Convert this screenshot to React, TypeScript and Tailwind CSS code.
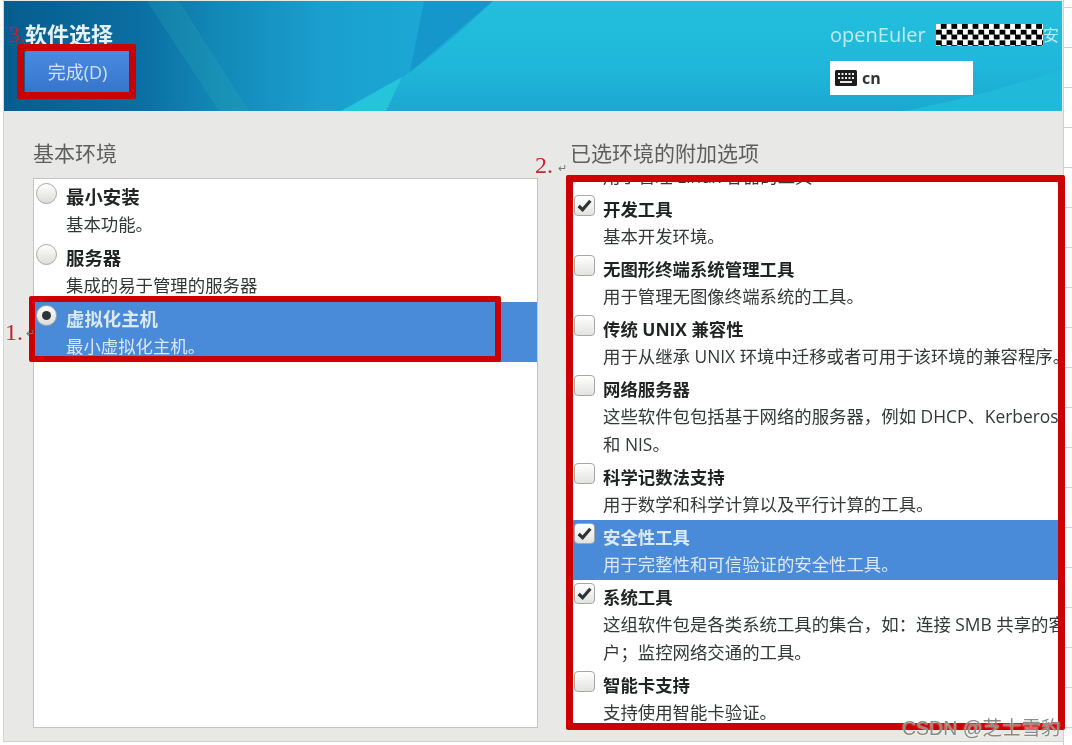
const cjk = "font-['Open_Sans','Noto_Sans_CJK_SC',sans-serif]"

type Row = { title: string; lines: string[]; checked?: boolean; selected?: boolean }

const environments: Row[] = [
  { title: "最小安装", lines: ["基本功能。"] },
  { title: "服务器", lines: ["集成的易于管理的服务器"] },
  { title: "虚拟化主机", lines: ["最小虚拟化主机。"], checked: true, selected: true },
]

const addons: Row[] = [
  { title: "容器管理", lines: ["用于管理 Linux 容器的工具"] },
  { title: "开发工具", lines: ["基本开发环境。"], checked: true },
  { title: "无图形终端系统管理工具", lines: ["用于管理无图像终端系统的工具。"] },
  { title: "传统 UNIX 兼容性", lines: ["用于从继承 UNIX 环境中迁移或者可用于该环境的兼容程序。"] },
  { title: "网络服务器", lines: ["这些软件包包括基于网络的服务器，例如 DHCP、Kerberos", "和 NIS。"] },
  { title: "科学记数法支持", lines: ["用于数学和科学计算以及平行计算的工具。"] },
  { title: "安全性工具", lines: ["用于完整性和可信验证的安全性工具。"], checked: true, selected: true },
  { title: "系统工具", lines: ["这组软件包是各类系统工具的集合，如：连接 SMB 共享的客", "户；监控网络交通的工具。"], checked: true },
  { title: "智能卡支持", lines: ["支持使用智能卡验证。"] },
]

function Radio({ on }: { on?: boolean }) {
  return (
    <span className="mt-[3px] flex h-[21px] w-[21px] shrink-0 items-center justify-center rounded-full border border-[#a8a8a6] bg-gradient-to-b from-[#ffffff] to-[#dcdcda]">
      {on && <span className="h-[9px] w-[9px] rounded-full bg-[#2e3436]" />}
    </span>
  )
}

function Checkbox({ on }: { on?: boolean }) {
  return (
    <span className="mt-[3px] flex h-[21px] w-[21px] shrink-0 items-center justify-center rounded-[4px] border border-[#a8a8a6] bg-gradient-to-b from-[#ffffff] to-[#e2e2e0]">
      {on && (
        <svg viewBox="0 0 16 16" className="h-[17px] w-[17px]">
          <path d="M2.5 8.5 L6.2 12 L13.5 3.5" fill="none" stroke="#2e3436" strokeWidth="3" />
        </svg>
      )}
    </span>
  )
}

function ListRow({
  row,
  control,
  inset,
  titleSize,
}: {
  row: Row
  control: React.ReactNode
  inset: string
  titleSize: string
}) {
  return (
    <div
      className={`flex whitespace-nowrap ${row.selected ? "bg-[#4a8bd9] text-[#dbe8f7]" : "text-[#333836]"}`}
    >
      <div className={`w-[32px] shrink-0 ${inset}`}>{control}</div>
      <div className="pt-[3px] pb-[2px] text-[17.4px] leading-[28px]">
        <div className={`h-[27px] font-bold ${titleSize} ${row.selected ? "" : "text-[#1f2322]"}`}>{row.title}</div>
        {row.lines.map((line) => (
          <div key={line}>{line}</div>
        ))}
      </div>
    </div>
  )
}

function KeyboardIcon() {
  return (
    <svg viewBox="0 0 22 16" className="h-[16px] w-[22px]">
      <rect width="22" height="16" rx="1.5" fill="#1c1c1c" />
      <path d="M3 3h2v2H3zM6.5 3h2v2h-2zM10 3h2v2h-2zM13.5 3h2v2h-2zM17 3h2v2h-2zM3 7h2v2H3zM6.5 7h2v2h-2zM10 7h2v2h-2zM13.5 7h2v2h-2zM17 7h2v2h-2zM5 11h12v2H5z" fill="#e8e8e8" />
    </svg>
  )
}

// the wallpaper swooshes behind the header
function HeaderArt() {
  return (
    <svg viewBox="0 0 1058 110" preserveAspectRatio="none" className="absolute inset-0 h-full w-full">
      <defs>
        <linearGradient id="base" x1="0" x2="1" y1="0" y2="0">
          <stop offset="0" stopColor="#075c8e" />
          <stop offset="0.13" stopColor="#0b6fa3" />
          <stop offset="0.2" stopColor="#1288b6" />
          <stop offset="0.3" stopColor="#1a9fce" />
          <stop offset="0.42" stopColor="#1ca9d6" />
        </linearGradient>
        <linearGradient id="light" x1="0" x2="0" y1="0" y2="1">
          <stop offset="0" stopColor="#22bfdc" />
          <stop offset="0.55" stopColor="#20b8da" />
          <stop offset="1" stopColor="#1ba8d1" />
        </linearGradient>
      </defs>
      <rect width="1058" height="110" fill="url(#base)" />
      <path d="M143 0 L175 0 L245 110 L215 110 Z" fill="#2aa6b8" opacity="0.25" />
      <path d="M420 0 L489 0 Q447 35 406 71 Z" fill="#1597cc" />
      <path d="M489 0 L1058 0 L1058 110 L337 110 Q399 87 489 0 Z" fill="url(#light)" />
      <path d="M337 110 L398 76 L382 110 Z" fill="#25c4da" />
      <path d="M900 110 Q980 95 1058 68 L1058 110 Z" fill="#21b9da" />
    </svg>
  )
}

function Frame({ className }: { className: string }) {
  return <div className={`absolute rounded-[2px] border-[#cc0000] ${className}`} />
}

export default function App() {
  return (
    <div className={`relative flex h-[745px] w-[1072px] overflow-hidden bg-white blur-[0.4px] ${cjk}`}>
      <div className="ml-[3px] flex h-[741px] w-[1060px] flex-col border-l border-[#d4d4d2] bg-[#e8e8e7]">
        {/* header */}
        <header className="relative mt-px flex h-[110px] w-[1058px] shrink-0 justify-between overflow-hidden pl-[21px]">
          <HeaderArt />
          <div className="relative">
            <h1 className="pt-[18px] text-[22px] leading-[30px] font-semibold text-[#e4f2f8]">软件选择</h1>
            <button className="mt-[2px] flex h-[43px] w-[105px] items-center justify-center rounded-[2px] bg-gradient-to-b from-[#4a8ae0] to-[#3574cc] text-[18px] text-[#cfe1f3]">
              完成(D)
            </button>
          </div>
          <div className="relative w-[232px] shrink-0 pt-[19px]">
            <div className="flex h-[30px] items-center whitespace-nowrap text-[20px] text-[#bdebf5]">
              <span className="w-[106px]">openEuler</span>
              <span className="h-[22px] w-[107px] bg-[repeating-conic-gradient(#000000_0_25%,#ffffff_0_50%)] bg-[length:10.6px_10.6px]" />
              <span className="text-[16px]">安</span>
            </div>
            <div className="mt-[11px] flex h-[34px] w-[143px] items-center gap-[5px] bg-white pl-[5px]">
              <KeyboardIcon />
              <span className="text-[16px] font-bold text-[#2e3436]">cn</span>
            </div>
          </div>
        </header>

        {/* lists */}
        <main className="flex min-h-0 flex-1 pt-[27px] pl-[29px]">
          <section className="flex w-[505px] flex-col">
            <h2 className="h-[40px] text-[21px] leading-[30px] text-[#5c5f5e]">基本环境</h2>
            <div className="flex h-[550px] flex-col gap-px border border-[#c4c4c2] bg-white pt-px">
              {environments.map((row) => (
                <ListRow
                  key={row.title}
                  row={row}
                  inset="pl-[2px]"
                  titleSize="text-[18.4px]"
                  control={<Radio on={row.checked} />}
                />
              ))}
            </div>
          </section>
          <section className="ml-[32px] flex min-w-0 flex-1 flex-col">
            <h2 className="h-[40px] text-[21px] leading-[30px] text-[#5c5f5e]">已选环境的附加选项</h2>
            <div className="h-[550px] overflow-hidden bg-white">
              <div className="-mt-[46px] pl-[1px]">
                {addons.map((row) => (
                  <ListRow
                    key={row.title}
                    row={row}
                    inset="pl-[3px]"
                    titleSize="text-[17.4px]"
                    control={<Checkbox on={row.checked} />}
                  />
                ))}
              </div>
            </div>
          </section>
        </main>
      </div>

      {/* page edge of the pasted screenshot */}
      <div className="flex h-[745px] w-[9px] flex-col border-l border-[#d0d0d0] pt-[7px]">
        {Array.from({ length: 19 }).map((_, i) => (
          <div key={i} className="h-[40px] shrink-0 border-t border-[#d0d0d0]" />
        ))}
      </div>
      <div className="absolute bottom-[3px] left-[3px] h-px w-[1060px] bg-[#cfcfcf]" />

      {/* red annotations */}
      <Frame className="top-[44px] left-[17px] h-[55px] w-[119px] border-[7px]" />
      <Frame className="top-[296px] left-[29px] h-[66px] w-[472px] border-[6px]" />
      <Frame className="top-[175px] left-[566px] h-[555px] w-[499px] border-[7px]" />
      <span className="absolute top-[16px] left-[8px] font-['Liberation_Serif',serif] text-[24px] text-[#c0262c]">3.</span>
      <span className="absolute top-[314px] left-[5px] font-['Liberation_Serif',serif] text-[24px] text-[#c0262c]">1.</span>
      <span className="absolute top-[147px] left-[535px] font-['Liberation_Serif',serif] text-[24px] text-[#c0262c]">2.</span>
      <span className="absolute top-[160px] left-[558px] text-[11px] text-[#777777]">↵</span>
      <span className="absolute top-[325px] left-[26px] text-[11px] text-[#777777]">↵</span>

      {/* watermark */}
      <span className="absolute top-[714px] left-[902px] whitespace-nowrap font-['Liberation_Sans','Noto_Sans_CJK_SC',sans-serif] text-[19.5px] text-[#8a8a8a] [text-shadow:0_0_2px_#ffffff]">
        CSDN @芝士雪豹
      </span>
    </div>
  )
}
